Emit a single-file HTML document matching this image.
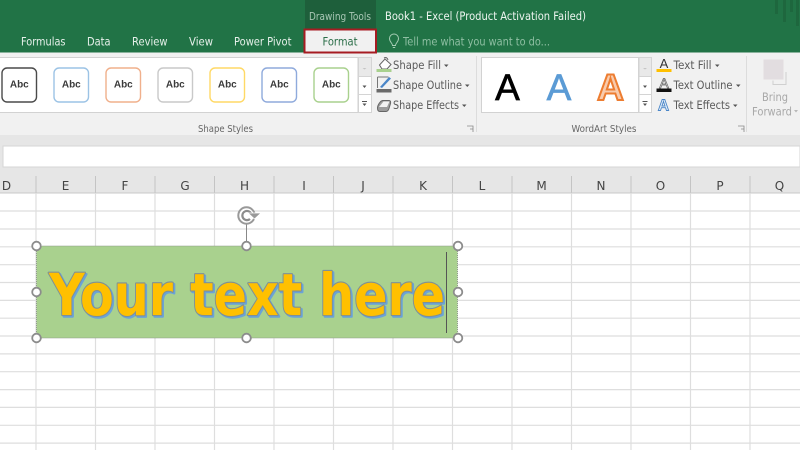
<!DOCTYPE html>
<html><head><meta charset="utf-8"><title>Book1 - Excel</title>
<style>
html,body{margin:0;padding:0;background:#fff;width:800px;height:450px;overflow:hidden}
svg{display:block;font-family:"Liberation Sans",sans-serif}
.d{font-family:"DejaVu Sans",sans-serif}
.t{fill:#e6f0ea;font-size:11.5px;font-family:"DejaVu Sans",sans-serif}
.g{fill:#5a5a5a;font-size:11.5px;font-family:"DejaVu Sans",sans-serif}
.abc{fill:#3a3a3a;font-size:10px;font-weight:bold;text-anchor:middle}
.hd{fill:#444;font-size:12px;text-anchor:middle;font-family:"DejaVu Sans",sans-serif}
.lbl{fill:#666;font-size:10px;font-family:"DejaVu Sans",sans-serif}
.st{fill:none;stroke-width:1.4}
.sb{fill:#fff;stroke:#d4d4d4}
.ar{fill:#555}
.gl{stroke:#dedede;stroke-width:1.2}
</style></head><body>
<svg width="800" height="450" viewBox="0 0 800 450" xmlns="http://www.w3.org/2000/svg">
<!-- title bar -->
<rect width="800" height="52.500" fill="#217346"/>
<rect x="305" width="71" height="29" fill="#1e5f3b"/>
<g fill="#1d633c" opacity=".75"><rect x="775" y="0" width="3" height="14"/><rect x="783" y="0" width="3" height="22"/><rect x="790" y="0" width="3" height="12"/><rect x="796" y="0" width="3" height="26"/></g>
<text class="d" x="309" y="20" textLength="62" lengthAdjust="spacingAndGlyphs" fill="#a9c7b5" font-size="10.500">Drawing Tools</text>
<text class="d" x="385" y="20" textLength="201" lengthAdjust="spacingAndGlyphs" fill="#eef5f0" font-size="11.500">Book1 - Excel (Product Activation Failed)</text>
<text class="t" x="21" y="45.500" textLength="44.500" lengthAdjust="spacingAndGlyphs">Formulas</text>
<text class="t" x="87" y="45.500" textLength="23.500" lengthAdjust="spacingAndGlyphs">Data</text>
<text class="t" x="132" y="45.500" textLength="35.500" lengthAdjust="spacingAndGlyphs">Review</text>
<text class="t" x="189" y="45.500" textLength="24" lengthAdjust="spacingAndGlyphs">View</text>
<text class="t" x="234" y="45.500" textLength="57.500" lengthAdjust="spacingAndGlyphs">Power Pivot</text>
<!-- tell me -->
<path d="M392.500 45.500c0-2.500-3-3.500-3-7a4.500 4.500 0 0 1 9 0c0 3.500-3 4.500-3 7z M392.800 47.500h2.400" fill="none" stroke="#a6cdb5" stroke-width="1"/>
<text class="d" x="403" y="45.500" textLength="147" lengthAdjust="spacingAndGlyphs" fill="#8fbfa3" font-size="11.500">Tell me what you want to do...</text>
<!-- ribbon -->
<rect y="52.500" width="800" height="82.500" fill="#f1f1f1"/>
<rect y="135" width="800" height="41" fill="#e6e6e6"/>
<rect x="304.500" y="29.500" width="71.500" height="23" fill="#f1f1f1" stroke="#a61c22" stroke-width="2"/>
<text class="d" x="322.500" y="45.500" textLength="35" lengthAdjust="spacingAndGlyphs" fill="#2b6e48" font-size="11.500">Format</text>
<!-- shape gallery -->
<rect x="-2" y="57.500" width="360" height="55" fill="#fff" stroke="#d2d2d2"/>
<rect class="st" x="2" y="68" width="34.500" height="34" rx="5" stroke="#4a4a4a" stroke-width="1.500"/>
<rect class="st" x="54" y="68" width="34.500" height="34" rx="5" stroke="#9cc3e5"/>
<rect class="st" x="106" y="68" width="34.500" height="34" rx="5" stroke="#f0b08c"/>
<rect class="st" x="158" y="68" width="34.500" height="34" rx="5" stroke="#c9c9c9"/>
<rect class="st" x="210" y="68" width="34.500" height="34" rx="5" stroke="#ffd966"/>
<rect class="st" x="262" y="68" width="34.500" height="34" rx="5" stroke="#8faadc"/>
<rect class="st" x="314" y="68" width="34.500" height="34" rx="5" stroke="#a9d18e"/>
<text class="abc" x="19.300" y="87.500">Abc</text><text class="abc" x="71.300" y="87.500">Abc</text><text class="abc" x="123.300" y="87.500">Abc</text><text class="abc" x="175.300" y="87.500">Abc</text><text class="abc" x="227.300" y="87.500">Abc</text><text class="abc" x="279.300" y="87.500">Abc</text><text class="abc" x="331.300" y="87.500">Abc</text>
<!-- scroll -->
<rect x="358.500" y="57.500" width="13" height="19" fill="#e9e9e9" stroke="#d4d4d4"/><rect class="sb" x="358.500" y="76.500" width="13" height="18"/><rect class="sb" x="358.500" y="94.500" width="13" height="18"/>
<path d="M362.500 68h4l-2 1.500z" fill="#c4c4c4"/><path class="ar" d="M362.500 85.500h4l-2 2.500zM362 101h5v1h-5zM362.500 103.500h4l-2 2.500z"/>
<!-- shape buttons -->
<path d="M379.500 65l5.500-6 6 5.500-4 4.500h-5z" fill="#fff" stroke="#666"/><path d="M384 58q3-1.500 4 2" fill="none" stroke="#666"/><rect x="376.500" y="69" width="15" height="3" fill="#a9d18e"/>
<path d="M377.500 77h11M377.500 77v11" fill="none" stroke="#777"/><path d="M380 87l9-10 2 1.500-9 9.500z" fill="#4a86c8"/><rect x="376.500" y="89" width="15" height="3.500" fill="#6a6a6a"/>
<path d="M377.500 108c0-3 3-7.500 5.500-7.500h6q2 0 1.500 3l-1.500 5q-1 3-3 3h-6q-2.500 0-2.500-3.500z" fill="#9c9c9c" stroke="#666"/><path d="M379 107l4.500-5.500h6l-2.500 5.500z" fill="#f2f2f2"/>
<text class="g" x="393" y="69" textLength="48" lengthAdjust="spacingAndGlyphs">Shape Fill</text><path class="ar" d="M444 64.500h4.500l-2.200 2.500z"/>
<text class="g" x="393" y="89" textLength="69" lengthAdjust="spacingAndGlyphs">Shape Outline</text><path class="ar" d="M465 84.500h4.500l-2.200 2.500z"/>
<text class="g" x="393" y="109" textLength="66" lengthAdjust="spacingAndGlyphs">Shape Effects</text><path class="ar" d="M462 104.500h4.500l-2.200 2.500z"/>
<text class="lbl" x="198" y="132" textLength="55" lengthAdjust="spacingAndGlyphs">Shape Styles</text>
<path d="M467 126h6v6M470 129h3v3" fill="none" stroke="#888" stroke-width=".8"/>
<rect x="476" y="56" width="1" height="76" fill="#dcdcdc"/>
<!-- wordart gallery -->
<rect x="481.500" y="57.500" width="157" height="55" fill="#fff" stroke="#d2d2d2"/>
<text x="507.500" y="100" text-anchor="middle" font-size="37" fill="#000" stroke="#000" stroke-width=".7">A</text>
<text x="559" y="100" text-anchor="middle" font-size="37" fill="#5b9bd5" stroke="#5b9bd5" stroke-width=".7">A</text>
<text x="610.500" y="100" text-anchor="middle" font-size="37" font-weight="bold" fill="#f8cbad" stroke="#ed7d31" stroke-width="2">A</text>
<rect x="639" y="57.500" width="12.500" height="19" fill="#e9e9e9" stroke="#d4d4d4"/><rect class="sb" x="639" y="76.500" width="12.500" height="18"/><rect class="sb" x="639" y="94.500" width="12.500" height="18"/>
<path d="M643 68h4l-2 1.500z" fill="#c4c4c4"/><path class="ar" d="M643 85.500h4l-2 2.500zM642.500 101h5v1h-5zM643 103.500h4l-2 2.500z"/>
<!-- text buttons -->
<text x="664" y="68" text-anchor="middle" font-size="13" fill="#333">A</text><rect x="656.500" y="69" width="15" height="3" fill="#ffc000"/>
<text x="664" y="88" text-anchor="middle" font-size="14" fill="#fff" stroke="#666" stroke-width=".7">A</text><rect x="656.500" y="88.500" width="15" height="3.500" fill="#111"/>
<text x="663.500" y="110.500" text-anchor="middle" font-size="15.500" font-weight="bold" fill="#e6f0fa" stroke="#4a86c8" stroke-width=".9">A</text>
<text class="g" x="673.500" y="69" textLength="38" lengthAdjust="spacingAndGlyphs">Text Fill</text><path class="ar" d="M715 64.500h4.500l-2.200 2.500z"/>
<text class="g" x="673.500" y="89" textLength="59" lengthAdjust="spacingAndGlyphs">Text Outline</text><path class="ar" d="M736 84.500h4.500l-2.200 2.500z"/>
<text class="g" x="673.500" y="109" textLength="56.500" lengthAdjust="spacingAndGlyphs">Text Effects</text><path class="ar" d="M733 104.500h4.500l-2.200 2.500z"/>
<text class="lbl" x="571.500" y="132" textLength="65" lengthAdjust="spacingAndGlyphs">WordArt Styles</text>
<path d="M738 126h6v6M741 129h3v3" fill="none" stroke="#888" stroke-width=".8"/>
<rect x="746" y="56" width="1" height="76" fill="#dcdcdc"/>
<!-- bring forward -->
<rect x="763.500" y="59.500" width="20" height="20" fill="#e2dde0"/><path d="M786 72v12.500h-13v-4" fill="none" stroke="#d0d0d0"/>
<text class="d" x="762" y="101" textLength="26" lengthAdjust="spacingAndGlyphs" fill="#a8a8a8" font-size="11.500">Bring</text>
<text class="d" x="752" y="115.500" textLength="40" lengthAdjust="spacingAndGlyphs" fill="#a8a8a8" font-size="11.500">Forward</text><path d="M794 110h4l-2 2.500z" fill="#b8b8b8"/>
<!-- formula bar -->
<rect x="3" y="146" width="797" height="21" fill="#fff" stroke="#d6d6d6"/>
<!-- headers -->
<rect y="176" width="800" height="17" fill="#e6e6e6"/>
<rect y="193" width="800" height="257" fill="#fff"/>
<path d="M36 176v17M95.500 176v17M155 176v17M214.500 176v17M274 176v17M333.500 176v17M393 176v17M452.500 176v17M512 176v17M571.500 176v17M631 176v17M690.500 176v17M750 176v17" stroke="#c4c4c4"/>
<rect y="192.500" width="800" height="1" fill="#c8c8c8"/>
<g class="hd"><text x="6.500" y="190">D</text><text x="65.500" y="190">E</text><text x="125" y="190">F</text><text x="185" y="190">G</text><text x="244.500" y="190">H</text><text x="304" y="190">I</text><text x="363" y="190">J</text><text x="423" y="190">K</text><text x="482" y="190">L</text><text x="541.500" y="190">M</text><text x="601" y="190">N</text><text x="660.500" y="190">O</text><text x="720" y="190">P</text><text x="779.500" y="190">Q</text></g>
<!-- grid -->
<path class="gl" d="M36 193v257M95.500 193v257M155 193v257M214.500 193v257M274 193v257M333.500 193v257M393 193v257M452.500 193v257M512 193v257M571.500 193v257M631 193v257M690.500 193v257M750 193v257"/>
<path class="gl" d="M0 211h800M0 229h800M0 246.800h800M0 264.700h800M0 282.500h800M0 300.400h800M0 318.200h800M0 336h800M0 353.900h800M0 371.700h800M0 389.600h800M0 407.400h800M0 425.300h800M0 443.100h800"/>
<!-- text box -->
<rect x="36.500" y="246" width="421" height="92" fill="#a9d18e" stroke="#8f9a8b" stroke-dasharray="1 1"/>
<g class="d" font-size="58" font-weight="bold" stroke-linejoin="round">
<text x="50.500" y="316.500" textLength="396" lengthAdjust="spacingAndGlyphs" fill="#5b9bd5" stroke="#6aa3d8" stroke-width="2.400">Your text here</text>
<text x="49" y="315" textLength="396" lengthAdjust="spacingAndGlyphs" fill="#ffc000" stroke="#7f9096" stroke-width="2.200">Your text here</text>
<text x="49" y="315" textLength="396" lengthAdjust="spacingAndGlyphs" fill="#ffc000">Your text here</text>
</g>
<rect x="446" y="252" width="1" height="81" fill="#555"/>
<!-- handles -->
<path d="M246.500 223v23" stroke="#888" stroke-width="1"/>
<g fill="#fff" stroke="#8c8c8c" stroke-width="1.800">
<circle cx="36.500" cy="246" r="4.300"/><circle cx="246.500" cy="246" r="4.300"/><circle cx="458" cy="246" r="4.300"/>
<circle cx="36.500" cy="292" r="4.300"/><circle cx="458" cy="292" r="4.300"/>
<circle cx="36.500" cy="338" r="4.300"/><circle cx="246.500" cy="338" r="4.300"/><circle cx="458" cy="338" r="4.300"/>
</g>
<!-- rotate -->
<circle cx="246.500" cy="215.500" r="8.200" fill="#fff" stroke="#999" stroke-width="2"/>
<path d="M250 219a4.600 4.600 0 1 1 1.300-5" fill="none" stroke="#8c8c8c" stroke-width="2.200"/>
<path d="M248 213h13l-6.500 6z" fill="#999" stroke="#fff" stroke-width=".8"/>
</svg>
</body></html>
